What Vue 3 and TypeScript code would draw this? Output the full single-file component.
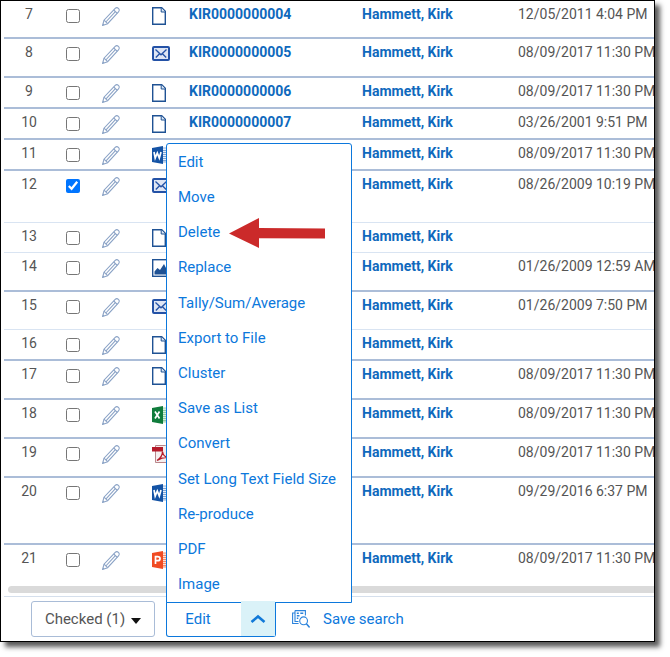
<script setup lang="ts">
import { ref } from 'vue'

type Kind = 'doc' | 'mail' | 'word' | 'image' | 'excel' | 'pdf' | 'ppt'

interface Row {
  num: number
  kind: Kind
  id: string
  date: string
  size: string
  minor?: boolean
  checked?: boolean
}

const rows = ref<Row[]>([
  { num: 7, kind: 'doc', id: 'KIR0000000004', date: '12/05/2011 4:04 PM', size: 'first' },
  { num: 8, kind: 'mail', id: 'KIR0000000005', date: '08/09/2017 11:30 PM', size: 'mid' },
  { num: 9, kind: 'doc', id: 'KIR0000000006', date: '08/09/2017 11:30 PM', size: 'low' },
  { num: 10, kind: 'doc', id: 'KIR0000000007', date: '03/26/2001 9:51 PM', size: 'low' },
  { num: 11, kind: 'word', id: '', date: '08/09/2017 11:30 PM', size: 'low' },
  { num: 12, kind: 'mail', id: '', date: '08/26/2009 10:19 PM', size: 'tall', minor: true, checked: true },
  { num: 13, kind: 'doc', id: '', date: '', size: 'low-minor', minor: true },
  { num: 14, kind: 'image', id: '', date: '01/26/2009 12:59 AM', size: 'mid' },
  { num: 15, kind: 'mail', id: '', date: '01/26/2009 7:50 PM', size: 'first', minor: true },
  { num: 16, kind: 'doc', id: '', date: '', size: 'low' },
  { num: 17, kind: 'doc', id: '', date: '08/09/2017 11:30 PM', size: 'mid' },
  { num: 18, kind: 'excel', id: '', date: '08/09/2017 11:30 PM', size: 'mid' },
  { num: 19, kind: 'pdf', id: '', date: '08/09/2017 11:30 PM', size: 'mid' },
  { num: 20, kind: 'word', id: '', date: '09/29/2016 6:37 PM', size: 'tallest' },
  { num: 21, kind: 'ppt', id: '', date: '08/09/2017 11:30 PM', size: 'last' },
])

const actions: string[] = [
  'Edit', 'Move', 'Delete', 'Replace', 'Tally/Sum/Average', 'Export to File', 'Cluster',
  'Save as List', 'Convert', 'Set Long Text Field Size', 'Re-produce', 'PDF', 'Image',
]

const menuOpen = ref(true)
</script>

<template>
  <main class="frame">
    <div class="list">
      <table class="grid">
        <colgroup>
          <col class="c-num" /><col class="c-check" /><col class="c-edit" /><col class="c-kind" />
          <col class="c-id" /><col class="c-name" /><col />
        </colgroup>
        <tbody>
          <tr v-for="row in rows" :key="row.num" :class="[row.size, { minor: row.minor }]">
            <td class="num">{{ row.num }}</td>
            <td class="check"><input v-model="row.checked" type="checkbox" :aria-label="`Select row ${row.num}`" /></td>
            <td class="edit">
              <button type="button" class="plain" :aria-label="`Edit row ${row.num}`">
                <svg width="18" height="19" viewBox="0 0 18 19" fill="none" stroke="#8ba3c6" stroke-width="1.1">
                  <path d="M.6 18.4 2 13.2 13.2 1.4c1-1 2.2-1 3.2-.1 1.1 1 1.1 2.4.1 3.5L5.6 16.7z" />
                  <path d="m2 13.2 3.6 3.5M11.7 3l3.6 3.3M3.8 15 13.4 4.7M.8 16.8l1.4 1.3" />
                </svg>
              </button>
            </td>
            <td class="kind">
              <svg v-if="row.kind === 'doc'" width="18" height="18" viewBox="0 0 18 18">
                <path d="M.7.7h9l3.6 3.6v13H.7z" fill="#fff" stroke="#1f5294" stroke-width="1.4" />
                <path d="M9.2.8v4.2h4" fill="#dce7f4" stroke="#1f5294" />
              </svg>
              <svg v-else-if="row.kind === 'mail'" width="18" height="18" viewBox="0 0 18 18">
                <rect x="1" y="2" width="16" height="13" rx="1" fill="#dfe6f4" stroke="#2452a6" stroke-width="2" />
                <path d="m3.5 4.5 5.5 5.3 5.5-5.3M3.8 12.5l3.5-3.5M14.2 12.5 10.7 9" fill="none" stroke="#2452a6" stroke-width="1.3" />
              </svg>
              <svg v-else-if="row.kind === 'image'" width="18" height="18" viewBox="0 0 18 18">
                <rect x=".7" y=".7" width="16.6" height="16.6" fill="#fff" stroke="#1f5294" stroke-width="1.4" />
                <path d="M2.5 15.5v-3l3-3.5 2.5 2 4-6 3.5 7v3.5z" fill="#1f5294" />
              </svg>
              <svg v-else-if="row.kind === 'pdf'" width="18" height="18" viewBox="0 0 18 18">
                <path d="M3.5.5h10l4 4v13h-14z" fill="#f4eeee" stroke="#b9868a" />
                <path d="M0 2h11v4.5H0z" fill="#b51a2a" />
                <path d="M5 15.5c3-2 5.5-5.500 5.500-9 .5 4 3 6 6.500 6-4-.5-8 .5-12 3z" fill="none" stroke="#b51a2a" stroke-width="1.3" />
              </svg>
              <svg v-else width="18" height="18" viewBox="0 0 18 18" :class="row.kind">
                <path class="sheet" d="M10 2h7.500v14H10z" />
                <path class="lines" d="M11 4.500h5M11 6.500h5M11 8.500h5M11 10.500h5M11 12.500h5M11 14.500h5" />
                <path class="cover" d="M0 2 11 0v18L0 16z" />
                <path v-if="row.kind === 'word'" class="mark" d="m2 6 1.2 6L5.300 7l2 5L9 6" />
                <path v-else-if="row.kind === 'excel'" class="mark" d="m3 5.500 4.500 7M7.500 5.500l-4.500 7" />
                <path v-else class="mark" d="M3.500 13V5.700h2c3.400 0 3.400 4 0 4h-2" />
              </svg>
            </td>
            <td><a v-if="row.id" href="#">{{ row.id }}</a></td>
            <td><a href="#">Hammett, Kirk</a></td>
            <td class="date">{{ row.date }}</td>
          </tr>
        </tbody>
      </table>
      <div class="scroll"></div>
    </div>

    <footer class="bar">
      <button type="button" class="scope">Checked (1)<span class="caret"></span></button>
      <div class="split">
        <button type="button" class="run">Edit</button>
        <button type="button" class="toggle" aria-label="More actions" @click="menuOpen = !menuOpen">
          <svg width="16" height="10" viewBox="0 0 16 10" fill="none" stroke="#1179d8" stroke-width="2.600">
            <path d="m1.500 8 6.500-5.500L14.500 8" />
          </svg>
        </button>
        <div v-if="menuOpen" class="menu">
          <button v-for="a in actions" :key="a" type="button">
            {{ a }}
            <svg v-if="a === 'Delete'" class="arrow" width="96" height="30" viewBox="0 0 96 30">
              <path d="M0 15.500 30 0v10l66 .6v10l-66-.3V30z" fill="#cb2a2a" />
            </svg>
          </button>
        </div>
      </div>
      <button type="button" class="save">
        <svg width="18" height="18" viewBox="0 0 18 18" fill="none" stroke="#2b83dc" stroke-width="1.1">
          <path d="M3 3H.600v10.500h6M3 .600h10.400v5M3 .600V11.500h3.500" />
          <path d="M4.800 3.200h2M8.300 3.200h3M4.800 5.700h2.700M4.800 8.200h1.500" stroke-width="1.400" />
          <circle cx="11.600" cy="10.800" r="3.900" fill="#fff" />
          <path d="m14.400 13.800 3.200 3.600" stroke-width="1.500" />
        </svg>
        Save search
      </button>
    </footer>
  </main>
</template>

<style>
body {
  margin: 0;
  background: #fff;
}
</style>

<style scoped>
.frame {
  margin: 0 15px 15px 0;
  border: 1px solid #000;
  background: #fff;
  box-shadow: 5px 5px 5px rgba(0, 0, 0, 0.65);
  font-family: Roboto, "Liberation Sans", sans-serif;
  font-size: 15px;
  color: #555;
}
button {
  font: inherit;
  padding: 0;
  border: 0;
  background: none;
  cursor: pointer;
}
svg {
  display: block;
}
.list {
  margin-left: 3px;
  overflow: hidden;
}
.grid {
  width: 100%;
  table-layout: fixed;
  border-collapse: separate;
  border-spacing: 0;
  font-size: 14px;
  line-height: 18px;
}
.c-num { width: 50px; }
.c-check { width: 38px; }
.c-edit { width: 60px; }
.c-kind { width: 37px; }
.c-id { width: 173px; }
.c-name { width: 156px; }
td {
  box-sizing: border-box;
  padding: 4px 0 0;
  vertical-align: top;
  border-bottom: 2px solid #abbdd8;
  white-space: nowrap;
  overflow: hidden;
}
.minor td { border-bottom: 1px solid #d9e4f2; }
.first td { height: 38px; }
.mid td { height: 39px; }
.low td { height: 31px; }
.low-minor td { height: 30px; }
.tall td { height: 52px; }
.tallest td { height: 67px; }
.last td {
  height: 41px;
  border-bottom: 0;
}
.num { text-align: center; }
.check { padding-left: 12px; }
.check input {
  display: block;
  width: 14px;
  height: 14px;
  margin: 4px 0 0;
}
.edit { padding: 6px 0 0 10px; }
.kind { padding: 6px 0 0; }
td a {
  color: #0f69bd;
  font-weight: 700;
  text-decoration: none;
}
.cover { fill: #1453a5; }
.sheet { fill: #eaf1fa; stroke: #8faed6; }
.lines { stroke: #7fa3d2; }
.mark { fill: none; stroke: #fff; stroke-width: 1.7; }
.excel .cover { fill: #107c3c; }
.excel .sheet { fill: #d8f0df; stroke: #9fd3b0; }
.excel .lines { stroke: #8fcaa2; }
.ppt .cover { fill: #f04b23; }
.ppt .sheet { fill: #ffe1d6; stroke: #f58b6c; }
.ppt .lines { stroke: #f58b6c; }
.scroll {
  height: 7px;
  margin: 0 0 3px 4px;
  border-radius: 4px 0 0 4px;
  background: #dadada;
}
.bar {
  display: flex;
  align-items: flex-start;
  margin-left: 3px;
  padding: 4px 0 4px 27px;
  border-top: 1px solid #d5dfec;
}
.scope {
  display: flex;
  align-items: center;
  justify-content: center;
  gap: 6px;
  box-sizing: border-box;
  width: 124px;
  height: 36px;
  border: 1px solid #a9bcd7;
  border-radius: 3px;
  color: #555;
}
.caret {
  margin-top: 3px;
  border: 5px solid transparent;
  border-top: 6px solid #111;
  border-bottom: 0;
}
.split {
  position: relative;
  display: flex;
  box-sizing: border-box;
  width: 110px;
  height: 36px;
  margin-left: 11px;
  border: 1px solid #0c78dc;
  border-top: 0;
  border-radius: 0 0 3px 3px;
  color: #0c78dc;
}
.run {
  flex: 1;
  padding-right: 12px;
  color: inherit;
}
.toggle {
  position: relative;
  z-index: 1;
  display: grid;
  place-items: center;
  width: 34px;
  background: #daf2f8;
}
.menu {
  position: absolute;
  bottom: 33px;
  left: -1px;
  display: flex;
  flex-direction: column;
  box-sizing: border-box;
  width: 186px;
  height: 460px;
  border: 1px solid #0c78dc;
  border-radius: 3px 3px 0 0;
  background: #fff;
}
.menu button {
  position: relative;
  flex: 1;
  padding: 0 11px;
  text-align: left;
  white-space: nowrap;
  color: #0c78dc;
}
.arrow {
  position: absolute;
  top: 4px;
  left: 62px;
}
.save {
  display: flex;
  align-items: center;
  gap: 13px;
  height: 36px;
  margin-left: 16px;
  color: #0c78dc;
}
</style>
